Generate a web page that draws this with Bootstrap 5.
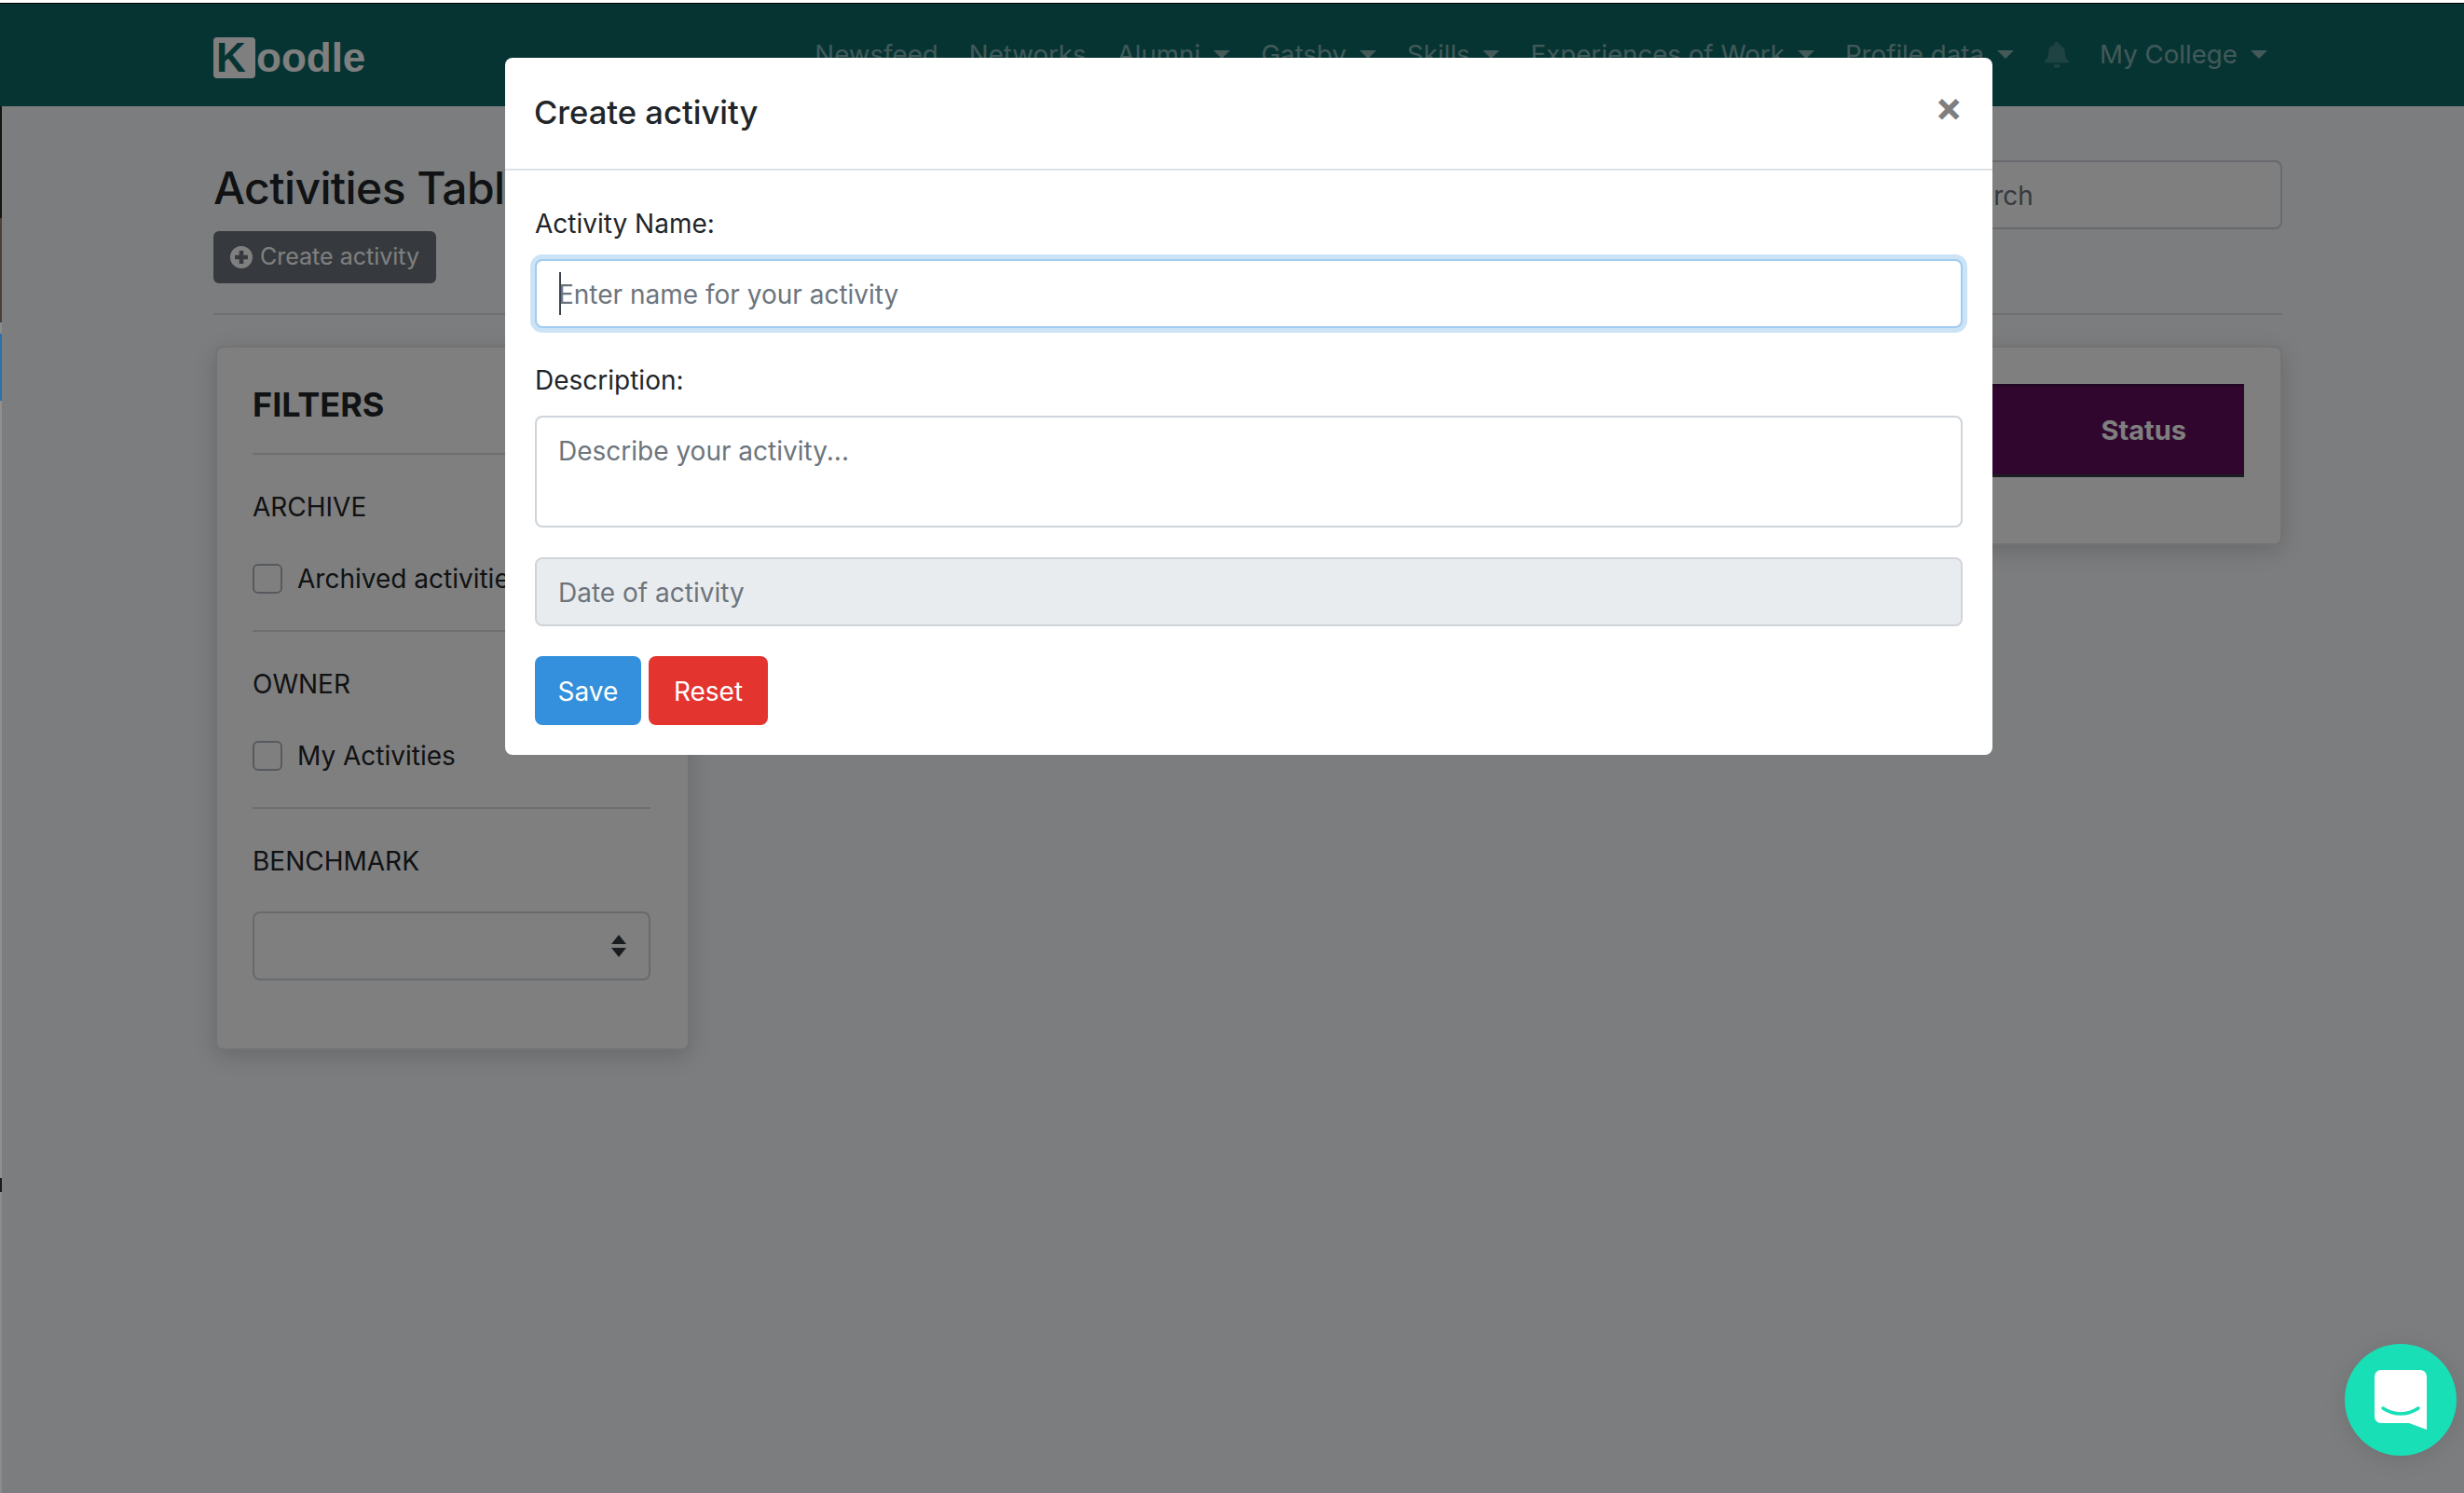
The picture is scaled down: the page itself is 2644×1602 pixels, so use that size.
<!DOCTYPE html>
<html lang="en">
<head>
<meta charset="utf-8">
<title>Activities Table</title>
<link href="https://cdn.jsdelivr.net/npm/bootstrap@5.3.0/dist/css/bootstrap.min.css" rel="stylesheet">
<style>
:root{--bs-body-font-family:Inter,"Noto Sans",sans-serif;--bs-body-font-size:28px;--bs-body-color:#212529;--bs-body-bg:#f8fafc}
body{background:#f8fafc;font-family:Inter,"Noto Sans",sans-serif;font-size:28px;min-height:1602px;color:#212529;overflow:hidden}
.top-strip{height:4px;background:#fff;border-bottom:1px solid #000}
.kl-nav{background:#0c6866;height:110px;padding:0}
.kl-wrap{width:2220px;margin-left:229px;display:flex;align-items:center;height:100%}
.kl-brand{display:flex;align-items:flex-start;font:700 44px/44px "Liberation Sans",sans-serif;color:#fff;text-decoration:none;margin-top:6px}
.kl-k{display:block;width:45px;height:44px;background:#fff;color:#0c6866;border-radius:4px;padding-left:3px;line-height:44px;margin-right:1px}
.kl-links{margin-left:auto;display:flex;align-items:center;gap:33px;padding-right:16px}
.kl-links a{color:rgba(255,255,255,.5);text-decoration:none;font-size:27.7px;white-space:nowrap;line-height:1}
.kl-caret::after{content:"";display:inline-block;margin-left:14px;vertical-align:5px;border-top:9px solid;border-left:9px solid transparent;border-right:9px solid transparent}
.kl-bell{width:26px;height:28px;fill:rgba(255,255,255,.2);display:block}
.kl-page{width:2220px;margin-left:229px;padding-top:58px}
.kl-title{font-size:48px;font-weight:500;line-height:60px;margin:0 0 16px;letter-spacing:-.6px;color:#212529;white-space:nowrap}
.kl-head{height:164px;display:flex;justify-content:space-between;align-items:flex-start}
.kl-create{background:#6c757d;border:0;color:#fff;font-size:25px;height:56px;width:239px;padding:0 0 0 18px;border-radius:6px;display:flex;align-items:center;gap:8px}
.kl-create svg{width:24px;height:24px;fill:#fff;flex:none}
.kl-search{width:388px;height:74px;font-size:28px;padding:2px 26px 0;border:2px solid #ced4da;border-radius:8px;background:#fff;color:#6c757d}
.kl-search::placeholder{color:#6c757d;opacity:1}
.kl-rule{height:2px;background:#dfdfe0;margin:0}
.kl-cols{display:flex;gap:32px;margin-top:33px;align-items:flex-start}
.kl-card{background:#fff;border:2px solid #e6e6e6;border-radius:8px;box-shadow:0 6px 24px rgba(0,0,0,.16)}
.kl-filters{width:509px;height:756px;padding:40px 40px 0 38px;margin-left:2px;flex:none}
.kl-filters h5{font-size:36px;font-weight:700;line-height:1.2;margin:0 0 30px}
.kl-filters hr{margin:0;border:0;height:2px;background:#dfdfe0;opacity:1}
.kl-label{font-size:28px;line-height:28px;margin:0;padding-top:42px;padding-bottom:47px}
.kl-label-last{padding-bottom:40px}
.kl-check{display:flex;align-items:center;gap:16px;height:32px;margin-bottom:39px;padding:0;white-space:nowrap}
.kl-check .form-check-input{width:32px;height:32px;margin:0;float:none;border:2px solid #adb5bd;border-radius:6px;flex:none;background-color:#fff}
.kl-select{height:74px;width:100%;font-size:28px;border:2px solid #ced4da;border-radius:8px;background-color:#fff;background-position:right 24px center;background-size:16px 24px;background-image:url("data:image/svg+xml,%3csvg xmlns='http://www.w3.org/2000/svg' viewBox='0 0 16 24'%3e%3cpath fill='%23343a40' d='M8 0l8 10H0zM8 24L0 14h16z'/%3e%3c/svg%3e")}
.kl-main{flex:1;height:214px;padding:39px 39px 0 23px}
.kl-thead{height:100px;background:#600c5c;border-top:3px solid #4b0a49;border-bottom:3px solid #343a40;display:flex;justify-content:flex-end;align-items:center;color:#fff;font-weight:700;font-size:29px;padding-right:62px}
.kl-dialog{max-width:1596px;width:1596px;margin:62px 0 0 542px}
.kl-dialog .modal-content{border-radius:8px;border:0;height:748px;background:#fff}
.kl-dialog .modal-header{height:121px;padding:0 32px 0 31px;border-bottom:2px solid #dee2e6;display:flex;align-items:center;justify-content:space-between}
.kl-dialog .modal-title{font-size:34.6px;font-weight:500;line-height:1.2;margin:0 0 2px}
.kl-x{border:0;background:none;padding:0;font-size:44px;font-weight:700;line-height:1;color:#7f7f7f;margin-top:-16px;margin-right:0}
.kl-dialog .modal-body{padding:40px 32px 0}
.kl-dialog label{display:block;font-size:28px;line-height:34px;margin-bottom:21px}
.kl-dialog .form-control{font-size:28px;border:2px solid #ced4da;border-radius:8px;padding:2px 23px 0;height:74px;color:#495057;box-shadow:none;background-color:#fff}
.kl-dialog .form-control::placeholder{color:#6c757d;opacity:1}
.kl-dialog textarea.form-control{height:120px;padding-top:15px;resize:none}
.kl-dialog .kl-date{background-color:#e9ecef;margin-top:32px}
.kl-field{position:relative;margin-bottom:39px}
.kl-dialog .kl-focus{border-color:#a1cbef;box-shadow:0 0 0 5px rgba(52,144,220,.25)}
.kl-caretbar{position:absolute;left:26px;top:14px;width:2px;height:46px;background:#3b4249}
.kl-actions{display:flex;gap:8px;margin-top:32px}
.kl-btn{height:74px;border:0;border-radius:8px;font-size:28px;color:#fff;padding:1px 0 0;font-weight:400}
.kl-save{width:114px;background:#3490dc}
.kl-reset{width:128px;background:#e3342f}
.kl-chat{position:fixed;z-index:1060;right:8px;bottom:40px;width:120px;height:120px;border-radius:50%;background:#18dfb6;display:flex;align-items:center;justify-content:center;box-shadow:0 4px 24px rgba(0,0,0,.1)}
.kl-chat svg{width:56px;height:64px;display:block}
.modal-backdrop.kl-dim{top:4px;height:1598px}
.kl-sliver{position:fixed;z-index:1060;left:0;top:114px;width:2px;height:1488px;background:linear-gradient(#17130f 0,#17130f 120px,#4b4036 120px,#4b4036 232px,#8c8c8c 232px,#8c8c8c 244px,#2e6fab 244px,#2e6fab 316px,#909090 316px,#909090 1150px,#1b1b1b 1150px,#1b1b1b 1165px,#8c8c8c 1165px)}
</style>
</head>
<body>
<div class="top-strip"></div>
<nav class="navbar kl-nav">
  <div class="kl-wrap">
    <a class="kl-brand" href="#"><span class="kl-k">K</span><span>oodle</span></a>
    <div class="kl-links">
      <a href="#">Newsfeed</a>
      <a href="#">Networks</a>
      <a href="#" class="kl-caret">Alumni</a>
      <a href="#" class="kl-caret">Gatsby</a>
      <a href="#" class="kl-caret">Skills</a>
      <a href="#" class="kl-caret">Experiences of Work</a>
      <a href="#" class="kl-caret">Profile data</a>
      <svg class="kl-bell" viewBox="0 0 26 30" preserveAspectRatio="none"><path d="M13 0c-1.500 0-2.400 1-2.400 2.300v.8C6.500 4.200 4.200 7.400 4.200 11.500c0 5.500-1.500 7.800-3.200 9.500-.6.600-1 1-1 1.700 0 .9.700 1.500 1.600 1.500h22.800c.9 0 1.600-.6 1.600-1.500 0-.7-.4-1.100-1-1.700-1.700-1.700-3.200-4-3.200-9.500 0-4.100-2.300-7.300-6.400-8.400v-.8C15.400 1 14.500 0 13 0zM9.500 26c0 2.200 1.500 4 3.500 4s3.500-1.800 3.500-4z"/></svg>
      <a href="#" class="kl-caret">My College</a>
    </div>
  </div>
</nav>

<main class="kl-page">
  <div class="kl-head">
    <div>
      <h1 class="kl-title">Activities Table</h1>
      <button class="kl-create" type="button"><svg viewBox="0 0 26 26"><path fill-rule="evenodd" d="M13 0a13 13 0 1 0 0 26 13 13 0 0 0 0-26zm-2.500 5.500h5v5h5v5h-5v5h-5v-5h-5v-5h5z"/></svg>Create activity</button>
    </div>
    <input class="kl-search form-control" placeholder="Search" type="text">
  </div>
  <div class="kl-rule"></div>
  <div class="kl-cols">
    <aside class="kl-card kl-filters">
      <h5>FILTERS</h5>
      <hr>
      <p class="kl-label">ARCHIVE</p>
      <div class="form-check kl-check"><input class="form-check-input" type="checkbox" id="a1"><span>Archived activities</span></div>
      <hr>
      <p class="kl-label">OWNER</p>
      <div class="form-check kl-check"><input class="form-check-input" type="checkbox" id="a2"><span>My Activities</span></div>
      <hr>
      <p class="kl-label kl-label-last">BENCHMARK</p>
      <select class="form-select kl-select"><option></option></select>
    </aside>
    <section class="kl-card kl-main">
      <div class="kl-thead">Status</div>
    </section>
  </div>
</main>

<div class="modal-backdrop show kl-dim"></div>
<div class="modal d-block" tabindex="-1">
  <div class="modal-dialog kl-dialog">
    <div class="modal-content">
      <div class="modal-header">
        <h5 class="modal-title">Create activity</h5>
        <button class="kl-x" type="button" aria-label="Close">×</button>
      </div>
      <div class="modal-body">
        <label for="n">Activity Name:</label>
        <div class="kl-field">
          <input id="n" class="form-control kl-focus" placeholder="Enter name for your activity" type="text">
          <span class="kl-caretbar"></span>
        </div>
        <label for="d">Description:</label>
        <textarea id="d" class="form-control" placeholder="Describe your activity..."></textarea>
        <input class="form-control kl-date" placeholder="Date of activity" type="text" readonly>
        <div class="kl-actions">
          <button class="kl-btn kl-save" type="button">Save</button>
          <button class="kl-btn kl-reset" type="button">Reset</button>
        </div>
      </div>
    </div>
  </div>
</div>

<div class="kl-sliver"></div>
<div class="kl-chat">
  <svg viewBox="0 0 56 64"><path fill="#fff" fill-rule="evenodd" d="M7 0h42a7 7 0 0 1 7 7v57l-19-7H7a7 7 0 0 1-7-7V7a7 7 0 0 1 7-7z"/><path d="M9 41c12 8 26 8 38 0" fill="none" stroke="#18dfb6" stroke-width="3.500" stroke-linecap="round"/></svg>
</div>
<script src="https://cdn.jsdelivr.net/npm/bootstrap@5.3.0/dist/js/bootstrap.bundle.min.js"></script>
</body>
</html>
